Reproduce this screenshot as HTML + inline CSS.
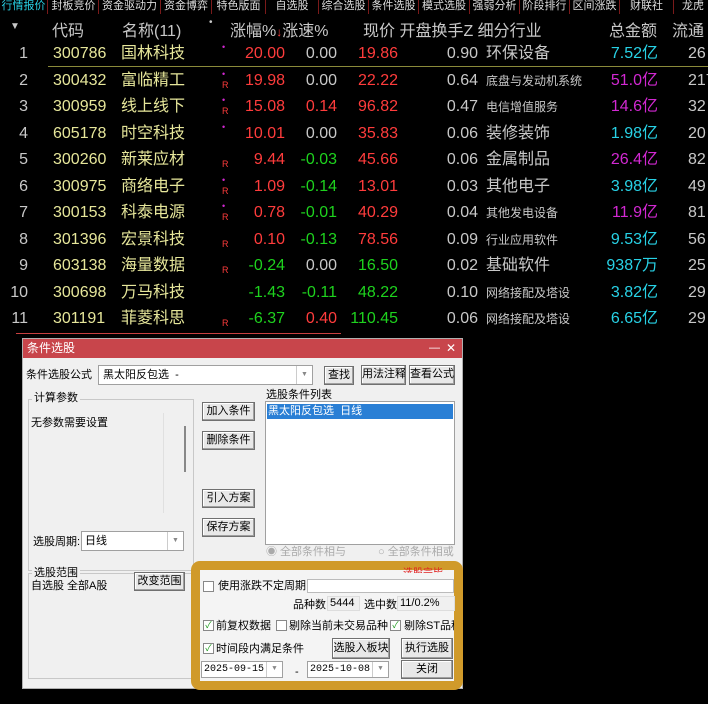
<!DOCTYPE html>
<html><head><meta charset="utf-8">
<style>
*{margin:0;padding:0;box-sizing:border-box}
body{width:708px;height:704px;background:#000;overflow:hidden;position:relative;font-family:"Liberation Sans","Noto Sans CJK SC",sans-serif}
.a{position:absolute;white-space:nowrap}
.tabs{position:absolute;left:0;top:0;width:708px;height:14px;background:#000;font-size:11px;line-height:13px;color:#ddd}
.tabs span{position:absolute;top:0;border-right:1px solid #7a1a1a;height:14px;overflow:hidden;white-space:nowrap;text-align:center}
.hd{font-size:16px;color:#c8c8c8;top:17px}
.r{font-size:16px;height:26px;line-height:26px}
.y{color:#e6e69a}.w{color:#c8c8c8}.red{color:#ff3c3c}.g{color:#1ed21e}.c{color:#28d2e6}.m{color:#d228d2}
.sm{font-size:12px}
.dlg{position:absolute;left:22px;top:338px;width:441px;height:351px;background:#f0f0f0;border:1px solid #b0b0b0;font-size:11px;color:#000}
.tt{position:absolute;left:0;top:0;width:100%;height:19px;background:#c8454b;color:#fff;font-size:12px;line-height:19px;padding-left:4px}
.btn{position:absolute;background:#e8e8e8;border:1px solid #707070;box-shadow:inset -1px -1px 0 #a0a0a0,inset 1px 1px 0 #fff;text-align:center;font-size:11px;line-height:17px;white-space:nowrap;overflow:hidden}
.box{position:absolute;background:#fff;border:1px solid #a0a0a0;white-space:nowrap;overflow:hidden}
.grp{position:absolute;border:1px solid #c8c8c8}
.lbl{position:absolute;font-size:11px;line-height:14px;white-space:nowrap}
.cb{position:absolute;width:11px;height:11px;border:1px solid #888;background:#fff;font-size:9px;line-height:9px;color:#1a9a1a;text-align:center}
.dd{position:absolute;right:0;top:0;width:16px;height:100%;border-left:1px solid #ccc;color:#888;font-size:7px;text-align:center;background:#fff}
</style></head><body>
<div class="tabs">
<span style="left:0;width:48px;color:#28d2e6">行情报价</span>
<span style="left:49px;width:50px">封板竞价</span>
<span style="left:99px;width:62px">资金驱动力</span>
<span style="left:161px;width:51px">资金博弈</span>
<span style="left:212px;width:54px">特色版面</span>
<span style="left:266px;width:53px">自选股</span>
<span style="left:319px;width:50px">综合选股</span>
<span style="left:369px;width:50px">条件选股</span>
<span style="left:419px;width:51px">模式选股</span>
<span style="left:470px;width:50px">强弱分析</span>
<span style="left:520px;width:50px">阶段排行</span>
<span style="left:570px;width:50px">区间涨跌</span>
<span style="left:620px;width:54px">财联社</span>
<span style="left:682px;width:30px;border:none;text-align:left">龙虎</span>
</div>
<div class="a hd" style="left:10px;font-size:10px;top:21px">▼</div>
<div class="a hd" style="left:52px">代码</div>
<div class="a hd" style="left:122px">名称(11)</div>
<div class="a hd" style="left:209px;font-size:10px">•</div>
<div class="a hd" style="left:230px">涨幅%<span style="color:#ff3c3c;font-size:12px">↓</span>涨速%</div>
<div class="a hd" style="left:363px">现价 开盘换手Z 细分行业</div>
<div class="a hd" style="left:609px">总金额</div>
<div class="a hd" style="left:672px">流通</div>
<div class="a" style="left:48px;top:66px;width:660px;height:1px;background:#8a8a3a"></div>
<div id="rows"></div>
<script>
var d=[["1","300786","国林科技","•","","20.00","red","0.00","w","19.86","red","0.90","环保设备",0,"7.52亿","c","26"],
["2","300432","富临精工","•","R","19.98","red","0.00","w","22.22","red","0.64","底盘与发动机系统",1,"51.0亿","m","217"],
["3","300959","线上线下","•","R","15.08","red","0.14","red","96.82","red","0.47","电信增值服务",1,"14.6亿","m","32"],
["4","605178","时空科技","•","","10.01","red","0.00","w","35.83","red","0.06","装修装饰",0,"1.98亿","c","20"],
["5","300260","新莱应材","","R","9.44","red","-0.03","g","45.66","red","0.06","金属制品",0,"26.4亿","m","82"],
["6","300975","商络电子","•","R","1.09","red","-0.14","g","13.01","red","0.03","其他电子",0,"3.98亿","c","49"],
["7","300153","科泰电源","•","R","0.78","red","-0.01","g","40.29","red","0.04","其他发电设备",1,"11.9亿","m","81"],
["8","301396","宏景科技","","R","0.10","red","-0.13","g","78.56","red","0.09","行业应用软件",1,"9.53亿","c","56"],
["9","603138","海量数据","","R","-0.24","g","0.00","w","16.50","g","0.02","基础软件",0,"9387万","c","25"],
["10","300698","万马科技","","","-1.43","g","-0.11","g","48.22","g","0.10","网络接配及塔设",1,"3.82亿","c","29"],
["11","301191","菲菱科思","","R","-6.37","g","0.40","red","110.45","g","0.06","网络接配及塔设",1,"6.65亿","c","29"]];
var h="";
for(var i=0;i<d.length;i++){var r=d[i],t=41+i*26.5;
h+='<div class="a r w" style="left:0;width:28px;text-align:right;top:'+t+'px">'+r[0]+'</div>';
h+='<div class="a r y" style="left:53px;top:'+t+'px">'+r[1]+'</div>';
h+='<div class="a r y" style="left:121px;top:'+t+'px">'+r[2]+'</div>';
if(r[3])h+='<div class="a m" style="left:222px;font-size:9px;top:'+(t+1)+'px">•</div>';
if(r[4])h+='<div class="a" style="left:222px;font-size:9px;color:#ff3c3c;top:'+(t+12)+'px">R</div>';
h+='<div class="a r '+r[6]+'" style="left:230px;width:55px;text-align:right;top:'+t+'px">'+r[5]+'</div>';
h+='<div class="a r '+r[8]+'" style="left:287px;width:50px;text-align:right;top:'+t+'px">'+r[7]+'</div>';
h+='<div class="a r '+r[10]+'" style="left:340px;width:58px;text-align:right;top:'+t+'px">'+r[9]+'</div>';
h+='<div class="a r w" style="left:420px;width:58px;text-align:right;top:'+t+'px">'+r[11]+'</div>';
h+='<div class="a r w'+(r[13]?' sm':'')+'" style="left:486px;top:'+t+'px">'+r[12]+'</div>';
h+='<div class="a r '+r[15]+'" style="left:590px;width:68px;text-align:right;top:'+t+'px">'+r[14]+'</div>';
h+='<div class="a r w" style="left:688px;top:'+t+'px">'+r[16]+'</div>';}
document.getElementById("rows").innerHTML=h;
</script>
<div class="a" style="left:16px;top:333px;width:325px;height:1px;background:#c84040"></div>
<div class="dlg">
<div class="tt">条件选股<span style="position:absolute;right:22px;font-size:11px">—</span><span style="position:absolute;right:6px">✕</span></div>
<div class="lbl" style="left:3px;top:29px">条件选股公式</div>
<div class="box" style="left:75px;top:26px;width:215px;height:20px;line-height:18px;padding-left:4px">黑太阳反包选 &nbsp;-<div class="dd">▼</div></div>
<div class="btn" style="left:301px;top:27px;width:30px;height:19px">查找</div>
<div class="btn" style="left:338px;top:26px;width:45px;height:20px">用法注释</div>
<div class="btn" style="left:386px;top:26px;width:46px;height:20px">查看公式</div>
<div class="grp" style="left:5px;top:60px;width:166px;height:172px"></div>
<div class="lbl" style="left:9px;top:52px;background:#f0f0f0;padding:0 2px">计算参数</div>
<div class="lbl" style="left:8px;top:77px">无参数需要设置</div>
<div class="a" style="left:140px;top:74px;width:1px;height:100px;background:#e0e0e0"></div>
<div class="a" style="left:161px;top:87px;width:2px;height:46px;background:#888"></div>
<div class="btn" style="left:179px;top:63px;width:53px;height:19px">加入条件</div>
<div class="btn" style="left:179px;top:92px;width:53px;height:19px">删除条件</div>
<div class="btn" style="left:179px;top:150px;width:53px;height:19px">引入方案</div>
<div class="btn" style="left:179px;top:179px;width:53px;height:19px">保存方案</div>
<div class="lbl" style="left:243px;top:49px">选股条件列表</div>
<div class="box" style="left:242px;top:62px;width:190px;height:144px"><div style="margin:2px 1px;background:#2a7fd5;color:#fff;height:15px;line-height:15px;padding-left:1px">黑太阳反包选 &nbsp;日线</div></div>
<div class="lbl" style="left:10px;top:196px">选股周期:</div>
<div class="box" style="left:58px;top:192px;width:103px;height:20px;line-height:18px;padding-left:3px">日线<div class="dd">▼</div></div>
<div class="lbl" style="left:243px;top:206px;color:#aaa">◉ 全部条件相与</div>
<div class="lbl" style="left:355px;top:206px;color:#aaa">○ 全部条件相或</div>
<div class="grp" style="left:5px;top:234px;width:166px;height:106px"></div>
<div class="lbl" style="left:9px;top:227px;background:#f0f0f0;padding:0 2px">选股范围</div>
<div class="lbl" style="left:8px;top:240px">自选股 全部A股</div>
<div class="btn" style="left:111px;top:233px;width:51px;height:19px">改变范围</div>
<div class="a" style="left:168px;top:222px;width:272px;height:129px;border:9px solid #d09a2a;border-radius:9px;background:#f4f4f4"></div>
<div class="lbl" style="left:380px;top:228px;color:#e02020;font-size:10px;height:6px;overflow:hidden">选股完毕</div>
<div class="cb" style="left:180px;top:242px"></div>
<div class="lbl" style="left:195px;top:240px">使用涨跌不定周期</div>
<div class="box" style="left:284px;top:240px;width:147px;height:14px;border-color:#bbb"></div>
<div class="lbl" style="left:270px;top:259px">品种数</div>
<div class="box" style="left:304px;top:257px;width:33px;height:15px;line-height:13px;padding-left:2px;background:#f0f0f0;border-color:#ddd">5444</div>
<div class="lbl" style="left:341px;top:259px">选中数</div>
<div class="box" style="left:374px;top:257px;width:58px;height:15px;line-height:13px;padding-left:2px;background:#f0f0f0;border-color:#ddd">11/0.2%</div>
<div class="cb" style="left:180px;top:281px">✓</div>
<div class="lbl" style="left:193px;top:280px">前复权数据</div>
<div class="cb" style="left:253px;top:281px"></div>
<div class="lbl" style="left:266px;top:280px">剔除当前未交易品种</div>
<div class="cb" style="left:367px;top:281px">✓</div>
<div class="lbl" style="left:381px;top:280px;width:50px;overflow:hidden">剔除ST品种</div>
<div class="cb" style="left:180px;top:304px">✓</div>
<div class="lbl" style="left:193px;top:303px">时间段内满足条件</div>
<div class="btn" style="left:309px;top:299px;width:58px;height:21px;line-height:19px">选股入板块</div>
<div class="btn" style="left:378px;top:299px;width:52px;height:21px;line-height:19px">执行选股</div>
<div class="box" style="left:178px;top:322px;width:82px;height:17px;line-height:15px;padding-left:2px;font-size:10px;font-family:'Liberation Mono',monospace">2025-09-15<div class="dd">▼</div></div>
<div class="lbl" style="left:272px;top:326px">-</div>
<div class="box" style="left:284px;top:322px;width:82px;height:17px;line-height:15px;padding-left:2px;font-size:10px;font-family:'Liberation Mono',monospace">2025-10-08<div class="dd">▼</div></div>
<div class="btn" style="left:378px;top:321px;width:52px;height:19px">关闭</div>
</div>
</body></html>
